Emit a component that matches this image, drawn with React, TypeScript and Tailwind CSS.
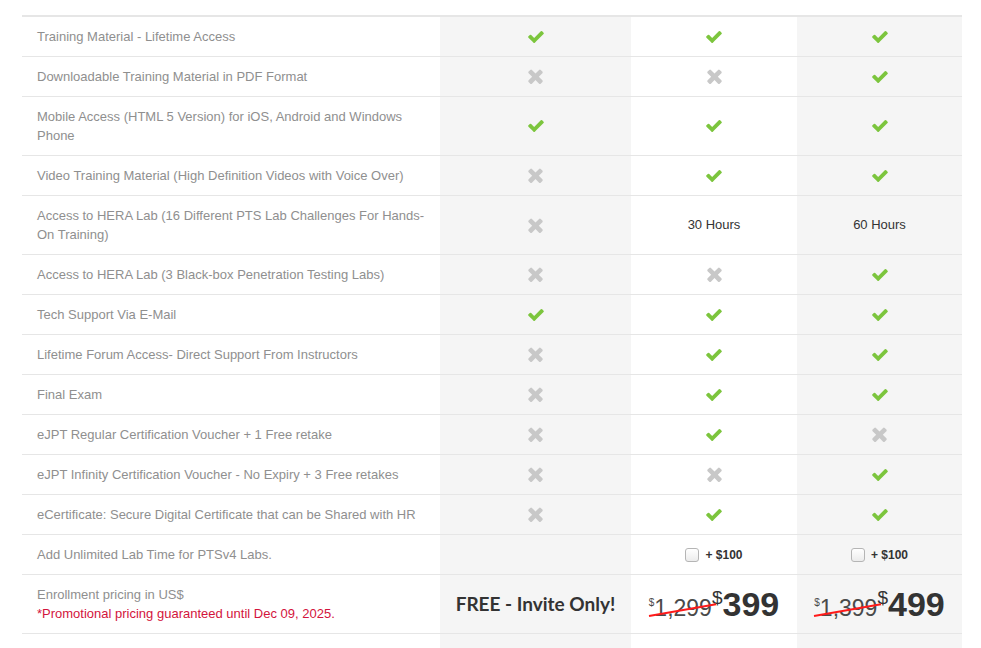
import React from 'react'

type Cell = 'y' | 'n' | string | null

const rows: { label: string; cells: Cell[] }[] = [
  { label: 'Training Material - Lifetime Access', cells: ['y', 'y', 'y'] },
  { label: 'Downloadable Training Material in PDF Format', cells: ['n', 'n', 'y'] },
  { label: 'Mobile Access (HTML 5 Version) for iOS, Android and Windows Phone', cells: ['y', 'y', 'y'] },
  { label: 'Video Training Material (High Definition Videos with Voice Over)', cells: ['n', 'y', 'y'] },
  {
    label: 'Access to HERA Lab (16 Different PTS Lab Challenges For Hands-On Training)',
    cells: ['n', '30 Hours', '60 Hours'],
  },
  { label: 'Access to HERA Lab (3 Black-box Penetration Testing Labs)', cells: ['n', 'n', 'y'] },
  { label: 'Tech Support Via E-Mail', cells: ['y', 'y', 'y'] },
  { label: 'Lifetime Forum Access- Direct Support From Instructors', cells: ['n', 'y', 'y'] },
  { label: 'Final Exam', cells: ['n', 'y', 'y'] },
  { label: 'eJPT Regular Certification Voucher + 1 Free retake', cells: ['n', 'y', 'n'] },
  { label: 'eJPT Infinity Certification Voucher - No Expiry + 3 Free retakes', cells: ['n', 'n', 'y'] },
  { label: 'eCertificate: Secure Digital Certificate that can be Shared with HR', cells: ['n', 'y', 'y'] },
]

const Check = () => (
  <svg viewBox="121 334 1550 1188" className="h-[12px] w-[16px] fill-[#7cc53d]">
    <path d="M1671 566q0 40-28 68l-724 724-136 136q-28 28-68 28t-68-28l-136-136-362-362q-28-28-28-68t28-68l136-136q28-28 68-28t68 28l294 295 656-657q28-28 68-28t68 28l136 136q28 28 28 68z" />
  </svg>
)

const Cross = () => (
  <svg viewBox="110 322 1188 1232" className="h-[15px] w-[15px] fill-[#c8c8c8]">
    <path d="M1298 1322q0 40-28 68l-136 136q-28 28-68 28t-68-28l-294-294-294 294q-28 28-68 28t-68-28l-136-136q-28-28-28-68t28-68l294-294-294-294q-28-28-28-68t28-68l136-136q28-28 68-28t68 28l294 294 294-294q28-28 68-28t68 28l136 136q28 28 28 68t-28 68l-294 294 294 294q28 28 28 68z" />
  </svg>
)

const colBg = ['bg-[#f5f5f5]', 'bg-white', 'bg-[#f5f5f5]']

function Value({ v }: { v: Cell }) {
  if (v === 'y') return <Check />
  if (v === 'n') return <Cross />
  if (!v) return null
  return <span className="text-[13px] text-[#333]">{v}</span>
}

function Price({ old, now }: { old: string; now: string }) {
  return (
    <div className="flex items-start text-[#333]">
      <div className="relative mt-[9px] flex items-start text-[#4a4a4a]">
        <span className="mt-[1px] text-[10px] leading-none">$</span>
        <span className="text-[23px] leading-none">{old}</span>
        <span className="absolute left-0 top-[18px] h-[2px] w-[68px] origin-left -rotate-[10deg] bg-[#ff1a1a]" />
      </div>
      <span className="text-[19px] leading-none">$</span>
      <span className="text-[34px] font-bold leading-[32px]">{now}</span>
    </div>
  )
}

function AddOn() {
  return (
    <label className="flex items-center gap-[6px] text-[12px] font-bold text-[#333]">
      <span className="h-[14px] w-[14px] rounded-[3px] border border-[#b5b5b5] bg-gradient-to-b from-white to-[#ececec]" />
      + $100
    </label>
  )
}

const grid = 'grid grid-cols-[418px_191px_166px_165px]'

export default function App() {
  return (
    <div className="min-h-[648px] overflow-hidden bg-white pt-[15px] [font-family:'Liberation_Sans',Arial,sans-serif]">
      <div className="mx-[22px] w-[940px] border-t-2 border-[#e6e6e6]">
        {rows.map((row) => (
          <div key={row.label} className={`${grid} border-b border-[#e6e6e6]`}>
            <div className="py-[10px] pl-[15px] pr-[10px] text-[13px] leading-[19px] text-[#8f8f8f]">{row.label}</div>
            {row.cells.map((c, i) => (
              <div key={i} className={`flex items-center justify-center ${colBg[i]}`}>
                <Value v={c} />
              </div>
            ))}
          </div>
        ))}

        <div className={`${grid} border-b border-[#e6e6e6]`}>
          <div className="py-[10px] pl-[15px] text-[13px] leading-[19px] text-[#8f8f8f]">Add Unlimited Lab Time for PTSv4 Labs.</div>
          <div className="bg-[#f5f5f5]" />
          <div className="flex items-center justify-center bg-white">
            <AddOn />
          </div>
          <div className="flex items-center justify-center bg-[#f5f5f5]">
            <AddOn />
          </div>
        </div>

        <div className={`${grid} border-b border-[#e6e6e6]`}>
          <div className="py-[10px] pl-[15px] text-[13px] leading-[19px]">
            <div className="text-[#8f8f8f]">Enrollment pricing in US$</div>
            <div className="text-[#d3143c]">*Promotional pricing guaranteed until Dec 09, 2025.</div>
          </div>
          <div className="flex items-center justify-center bg-[#f5f5f5]">
            <span className="[font-family:Lato,sans-serif] text-[19px] font-bold text-[#333]">FREE - Invite Only!</span>
          </div>
          <div className="flex items-center justify-center bg-white">
            <Price old="1,299" now="399" />
          </div>
          <div className="flex items-center justify-center bg-[#f5f5f5]">
            <Price old="1,399" now="499" />
          </div>
        </div>

        <div className={`${grid} h-[40px]`}>
          <div />
          <div className="bg-[#f5f5f5]" />
          <div className="bg-white" />
          <div className="bg-[#f5f5f5]" />
        </div>
      </div>
    </div>
  )
}
